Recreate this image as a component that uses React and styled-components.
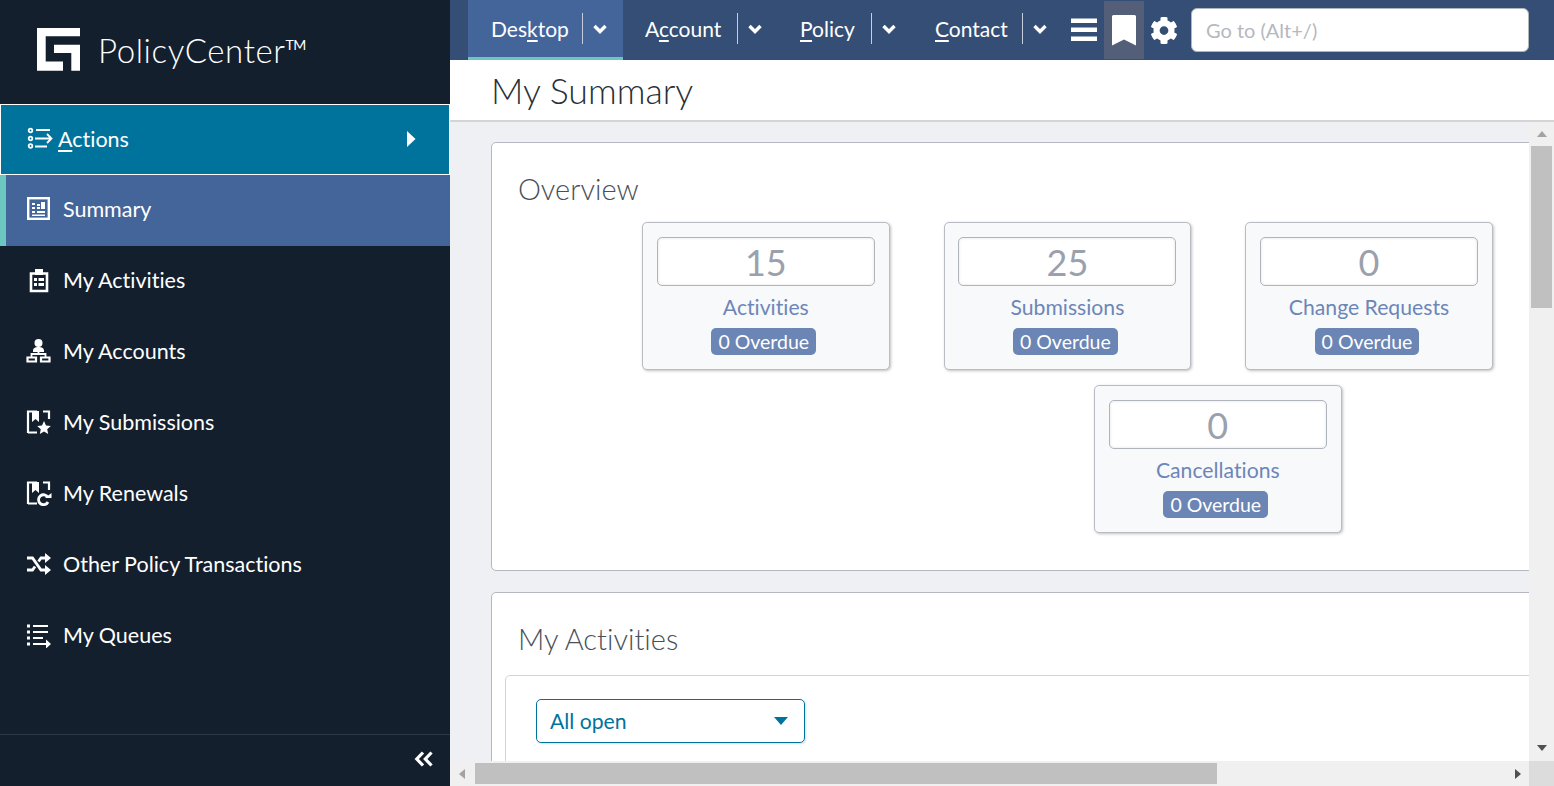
import React from 'react';
import styled, { createGlobalStyle } from 'styled-components';

const FONT = `"Lato", "Open Sans", sans-serif`;

const GlobalStyle = createGlobalStyle`
    html, body {
        margin: 0;
        height: 100%;
        overflow: hidden;
        font-family: ${FONT};
        font-variant-ligatures: none;
    }
    #root { height: 100%; }
    * { box-sizing: border-box; }
`;

const Page = styled.div`
    display: grid;
    grid-template-columns: 450px 1fr;
    width: 1554px;
    height: 786px;
    overflow: hidden;
`;

const Sidebar = styled.aside`
    display: flex;
    flex-direction: column;
    background: #141f2e;
    color: #fff;
    height: 786px;
`;

const Brand = styled.div`
    height: 104px;
    display: flex;
    align-items: center;
    gap: 18px;
    padding: 0 0 5px 37px;
`;

const BrandName = styled.div`
    font-size: 33px;
    font-weight: 300;
    letter-spacing: 0.6px;
    sup {
        font-size: 14px;
        font-weight: 400;
        vertical-align: 13px;
        line-height: 0;
        letter-spacing: -0.5px;
    }
`;

const ActionsRow = styled.div`
    height: 71px;
    background: #00739d;
    border: 1px solid #fff;
    display: flex;
    align-items: center;
    padding: 0 33px 2px 26px;
    gap: 5px;
    font-size: 21.5px;
    u { text-underline-offset: 3px; }
`;

const Spacer = styled.div`
    flex: 1;
`;

const NavRow = styled.div`
    height: 71px;
    display: flex;
    align-items: center;
    gap: 11px;
    padding-left: ${p => (p.$active ? '20px' : '26px')};
    padding-bottom: 3px;
    font-size: 21.5px;
    background: ${p => (p.$active ? '#44659a' : 'transparent')};
    border-left: ${p => (p.$active ? '6px solid #6bc7c0' : 'none')};
`;

const SideFooter = styled.div`
    margin-top: auto;
    height: 52px;
    border-top: 1px solid #2c3747;
    display: flex;
    align-items: center;
    justify-content: flex-end;
    padding: 0 16px 3px 0;
`;

const Main = styled.div`
    display: flex;
    flex-direction: column;
    min-width: 0;
    height: 786px;
    background: #eff0f4;
`;

const TopBar = styled.header`
    height: 60px;
    flex: none;
    background: #344e76;
    display: flex;
    align-items: stretch;
    padding-left: 18px;
    color: #fff;
`;

const Tab = styled.div`
    flex: none;
    width: ${p => p.$w}px;
    display: flex;
    align-items: center;
    padding-left: ${p => p.$pad}px;
    font-size: 21px;
    background: ${p => (p.$active ? '#44659a' : 'transparent')};
    border-bottom: 3px solid ${p => (p.$active ? '#6bc7c0' : 'transparent')};
    u { text-underline-offset: 3px; }
`;

const TabLabel = styled.span`
    flex: none;
    width: ${p => p.$w}px;
    white-space: nowrap;
`;

const TabDivider = styled.span`
    flex: none;
    width: 1px;
    height: 31px;
    background: #c6cedb;
    margin-right: 9px;
`;

const ToolIcon = styled.div`
    flex: none;
    width: ${p => p.$w}px;
    margin: 1px 0 1px;
    display: flex;
    align-items: center;
    justify-content: center;
    background: ${p => (p.$active ? '#535f78' : 'transparent')};
`;

const GoTo = styled.div`
    flex: none;
    width: 338px;
    height: 44px;
    margin: 8px 0 0 7px;
    background: #fff;
    border: 1px solid #b0b4bc;
    border-radius: 6px;
    color: #b5b8be;
    font-size: 20px;
    display: flex;
    align-items: center;
    padding-left: 14px;
`;

const TitleBar = styled.div`
    height: 62px;
    flex: none;
    background: #fff;
    border-bottom: 2px solid #d4d4d4;
    padding: 9px 0 0 41px;
    font-size: 35.7px;
    font-weight: 300;
    color: #2a2f38;
`;

const ScrollGrid = styled.div`
    flex: 1;
    min-height: 0;
    display: grid;
    grid-template-columns: 1fr 25px;
    grid-template-rows: 1fr 25px;
`;

const Viewport = styled.div`
    overflow: hidden;
    min-width: 0;
    min-height: 0;
    padding: 20px 0 0 41px;
`;

const Card = styled.section`
    width: 1300px;
    background: #fff;
    border: 1px solid #b5b8c0;
    border-radius: 5px;
    margin-bottom: 21px;
    padding: ${p => (p.$flush ? '27px 0 0 26px' : '27px 0 37px 26px')};
`;

const CardTitle = styled.h2`
    margin: 0;
    font-size: 29px;
    line-height: 38px;
    font-weight: 300;
    color: #4a4f58;
`;

const TileRow = styled.div`
    display: flex;
    gap: 54px;
    margin: ${p => p.$top}px 0 0 ${p => p.$left}px;
`;

const Tile = styled.div`
    width: 247.6px;
    height: 148px;
    background: #f8f9fb;
    border: 1px solid #b9bcc3;
    border-radius: 5px;
    box-shadow: 1px 1px 3px rgba(0, 0, 0, 0.25);
    padding: 14px;
    display: flex;
    flex-direction: column;
    align-items: center;
`;

const TileValue = styled.div`
    width: 218px;
    height: 49px;
    background: #fff;
    border: 1px solid #b0b4bc;
    border-radius: 5px;
    box-shadow: inset 0 0 3px rgba(0, 0, 0, 0.12);
    color: #9aa1ad;
    font-size: 36px;
    line-height: 49px;
    text-align: center;
`;

const TileLabel = styled.div`
    margin-top: 6px;
    font-size: 21.2px;
    line-height: 30px;
    color: #6c86b8;
    white-space: nowrap;
`;

const Badge = styled.div`
    margin: 6px 4px 0 0;
    height: 27px;
    padding: 0 7px;
    background: #6b85b5;
    color: #fff;
    border-radius: 5px;
    font-size: 19.5px;
    line-height: 27px;
    white-space: nowrap;
`;

const InnerPanel = styled.div`
    margin: 17px 0 0 -13px;
    height: 100px;
    border: 1px solid #d4d4d4;
    border-radius: 5px;
    padding: 23px 0 0 30px;
`;

const Select = styled.div`
    width: 269px;
    height: 44px;
    border: 1px solid #00739d;
    border-radius: 5px;
    box-shadow: 1px 1px 2px rgba(0, 0, 0, 0.15);
    color: #00739d;
    font-size: 21.2px;
    display: flex;
    align-items: center;
    justify-content: space-between;
    padding: 0 16px 0 13px;
`;

const Track = styled.div`
    background: #f0f0f0;
    display: flex;
    flex-direction: ${p => (p.$vertical ? 'column' : 'row')};
    align-items: center;
    padding: ${p => (p.$vertical ? '9px 0 10px' : '0 8px 0 9px')};
`;

const Arrow = styled.div`
    flex: none;
    width: 0;
    height: 0;
    border-style: solid;
    border-color: transparent;
    ${p => p.$dir === 'up' && `border-width: 0 5.5px 6px; border-bottom-color: ${p.$color};`}
    ${p => p.$dir === 'down' && `border-width: 6px 5.5px 0; border-top-color: ${p.$color};`}
    ${p => p.$dir === 'left' && `border-width: 5.5px 6px 5.5px 0; border-right-color: ${p.$color};`}
    ${p => p.$dir === 'right' && `border-width: 5.5px 0 5.5px 6px; border-left-color: ${p.$color};`}
`;

const VThumb = styled.div`
    width: 21px;
    height: 162px;
    margin: 9px 0 auto;
    background: #c0c0c0;
`;

const HThumb = styled.div`
    width: 742px;
    height: 21px;
    margin: 0 auto 0 10px;
    background: #c0c0c0;
`;

const Corner = styled.div`
    background: #dcdcdc;
`;

const Icon = ({ children, size = 26, view = 26 }) => (
    <svg width={size} height={size} viewBox={`0 0 ${view} ${view}`} fill="none" style={{ flex: 'none' }}>
        {children}
    </svg>
);

const LogoMark = () => (
    <svg width="43" height="43" viewBox="0 0 43 43" style={{ flex: 'none' }}>
        <path fill="#fff" d="M0 0H43V8.300H8.700V33.500H26V42.700H0Z" />
        <path fill="#fff" d="M17 16.700H43V42.700H34.300V25H17Z" />
    </svg>
);

const ActionsIcon = () => (
    <Icon>
        <g stroke="#fff" strokeWidth="1.800">
            <circle cx="3.500" cy="4.500" r="1.800" />
            <circle cx="3.500" cy="12.500" r="1.800" />
            <circle cx="3.500" cy="20" r="1.800" />
            <path d="M9 4H23M8 12.500H24M20 8l4.500 4.500L20 17M8 20.500H20" />
        </g>
    </Icon>
);

const SummaryIcon = () => (
    <Icon>
        <rect x="2.200" y="2.200" width="20.600" height="20.600" stroke="#fff" strokeWidth="2.400" />
        <path fill="#fff" d="M6 7h3v2H6zM6 11h3v2H6zM6 15h3v2H6zM6 18.500h13V20H6zM11 11h3v2h-3zM11 15h8v2h-8zM15 6h4v7h-4zM11 8h3v2h-3z" />
    </Icon>
);

const ActivitiesIcon = () => (
    <Icon>
        <path stroke="#fff" strokeWidth="2.600" d="M5 6.500H21V24H5Z" />
        <path fill="#fff" d="M9 2h8v6H9zM8 11h3v3H8zM12.500 11H18v3h-5.500zM8 16h3v3H8zM12.500 16H18v3h-5.500z" />
    </Icon>
);

const AccountsIcon = () => (
    <Icon>
        <circle cx="12.500" cy="5" r="4" fill="#fff" />
        <path fill="#fff" d="M7 13c0-3 2-4 5.500-4s5.500 1 5.500 4v1H7z" />
        <path stroke="#fff" strokeWidth="1.800" d="M12.500 13v3M5.500 19v-3h14v3" />
        <path stroke="#fff" strokeWidth="2.200" d="M1.500 19.500h8.500v4H1.500zM15 19.500h8.500v4H15z" />
    </Icon>
);

const BookmarkDoc = ({ children }) => (
    <Icon>
        <path stroke="#fff" strokeWidth="2.200" d="M2 24V2.500H11M17 2.500H23V10M2 23.500H11" />
        <path fill="#fff" d="M6 2h7v11l-3.500-3L6 13z" />
        {children}
    </Icon>
);

const SubmissionsIcon = () => (
    <BookmarkDoc>
        <path fill="#fff" d="M18 12l2 4.500 4.800.500-3.600 3.200 1 4.800-4.200-2.500-4.200 2.500 1-4.800-3.600-3.200 4.800-.500z" />
    </BookmarkDoc>
);

const RenewalsIcon = () => (
    <BookmarkDoc>
        <path stroke="#fff" strokeWidth="2.800" d="M22 17.500a5 5 0 1 0 0 4.500" />
        <path fill="#fff" d="M19 18h6.500v-5z" />
    </BookmarkDoc>
);

const ShuffleIcon = () => (
    <Icon>
        <path stroke="#fff" strokeWidth="2.800" d="M1 7H6.500L15 19H20M1 19H6.500L9 15.500M12.500 10.500L15 7H20" />
        <path fill="#fff" d="M19 2l6 5-6 5zM19 14l6 5-6 5z" />
    </Icon>
);

const QueuesIcon = () => (
    <Icon>
        <path fill="#fff" d="M1 2.500h3v3H1zM1 8.500h3v3H1zM1 14.500h3v3H1zM1 20.500h3v3H1z" />
        <path stroke="#fff" strokeWidth="2.200" d="M7 4H22M7 10H22M7 16H17M7 22H21" />
        <path fill="#fff" d="M20 17.500l5 4.500-5 4.500z" />
    </Icon>
);

const Chevron = ({ size = 16 }) => (
    <svg width={size} height={size} viewBox="0 0 16 16" fill="none" style={{ flex: 'none' }}>
        <path d="M2.500 5L8 10.500L13.500 5" stroke="#fff" strokeWidth="3.400" />
    </svg>
);

const CaretRight = () => (
    <svg width="9" height="16" viewBox="0 0 9 16" style={{ flex: 'none' }}>
        <path fill="#fff" d="M0 0L8.500 8L0 16Z" />
    </svg>
);

const DoubleChevron = () => (
    <svg width="20" height="16" viewBox="0 0 20 16" fill="none">
        <path d="M9 1.500L2.800 8L9 14.500M17.500 1.500L11.300 8L17.500 14.500" stroke="#fff" strokeWidth="3.200" />
    </svg>
);

const Hamburger = () => (
    <svg width="26" height="24" viewBox="0 0 26 24">
        <path fill="#fff" d="M0 0.500h26v4.500H0zM0 9.500h26v4.500H0zM0 18.500h26v4.500H0z" />
    </svg>
);

const Bookmark = () => (
    <svg width="24" height="31" viewBox="0 0 24 31">
        <path fill="#fff" d="M1.500 0H22.500Q24 0 24 1.500V30.500L12 24.500L0 30.500V1.500Q0 0 1.500 0Z" />
    </svg>
);

const Gear = () => (
    <svg width="28" height="29" viewBox="0 0 512 512">
        <path fill="#fff" d="M487.400 315.700l-42.600-24.600c4.300-23.200 4.300-47 0-70.200l42.600-24.600c4.900-2.800 7.100-8.600 5.500-14-11.100-35.600-30-67.800-54.700-94.600-3.800-4.100-10-5.100-14.800-2.300L380.800 110c-17.900-15.400-38.500-27.300-60.800-35.100V25.800c0-5.600-3.900-10.500-9.400-11.700-36.700-8.200-74.300-7.800-109.200 0-5.500 1.200-9.400 6.100-9.400 11.700V75c-22.200 7.900-42.800 19.800-60.800 35.100L88.700 85.500c-4.900-2.800-11-1.900-14.800 2.300-24.700 26.700-43.600 58.900-54.700 94.600-1.700 5.400.6 11.200 5.500 14L67.300 221c-4.300 23.200-4.300 47 0 70.200l-42.600 24.600c-4.900 2.800-7.100 8.600-5.500 14 11.100 35.600 30 67.800 54.700 94.600 3.800 4.100 10 5.100 14.800 2.300l42.600-24.600c17.900 15.400 38.500 27.300 60.800 35.100v49.200c0 5.600 3.900 10.500 9.400 11.700 36.700 8.200 74.300 7.800 109.200 0 5.500-1.200 9.400-6.100 9.400-11.700v-49.200c22.200-7.900 42.800-19.800 60.800-35.100l42.600 24.600c4.900 2.800 11 1.900 14.800-2.300 24.700-26.700 43.600-58.900 54.700-94.600 1.500-5.500-.7-11.300-5.600-14.100zM256 336c-44.100 0-80-35.900-80-80s35.900-80 80-80 80 35.900 80 80-35.900 80-80 80z" />
    </svg>
);

const SelectCaret = () => (
    <svg width="14" height="8" viewBox="0 0 14 8">
        <path fill="#00739d" d="M0 0H14L7 8Z" />
    </svg>
);

const sideItems = [
    { label: 'Summary', icon: <SummaryIcon />, active: true },
    { label: 'My Activities', icon: <ActivitiesIcon /> },
    { label: 'My Accounts', icon: <AccountsIcon /> },
    { label: 'My Submissions', icon: <SubmissionsIcon /> },
    { label: 'My Renewals', icon: <RenewalsIcon /> },
    { label: 'Other Policy Transactions', icon: <ShuffleIcon /> },
    { label: 'My Queues', icon: <QueuesIcon /> },
];

const tabs = [
    { label: <>Des<u>k</u>top</>, w: 155, pad: 23, labelW: 91, active: true },
    { label: <>A<u>c</u>count</>, w: 155, pad: 22, labelW: 92 },
    { label: <><u>P</u>olicy</>, w: 134, pad: 22, labelW: 71 },
    { label: <><u>C</u>ontact</>, w: 152, pad: 23, labelW: 87 },
];

const StatTile = ({ value, label }) => (
    <Tile>
        <TileValue>{value}</TileValue>
        <TileLabel>{label}</TileLabel>
        <Badge>0 Overdue</Badge>
    </Tile>
);

const App = () => (
    <Page>
        <GlobalStyle />
        <Sidebar>
            <Brand>
                <LogoMark />
                <BrandName>PolicyCenter<sup>TM</sup></BrandName>
            </Brand>
            <ActionsRow>
                <ActionsIcon />
                <span><u>A</u>ctions</span>
                <Spacer />
                <CaretRight />
            </ActionsRow>
            {sideItems.map(item => (
                <NavRow key={item.label} $active={item.active}>
                    {item.icon}
                    {item.label}
                </NavRow>
            ))}
            <SideFooter>
                <DoubleChevron />
            </SideFooter>
        </Sidebar>
        <Main>
            <TopBar>
                {tabs.map((tab, i) => (
                    <Tab key={i} $w={tab.w} $pad={tab.pad} $active={tab.active}>
                        <TabLabel $w={tab.labelW}>{tab.label}</TabLabel>
                        <TabDivider />
                        <Chevron />
                    </Tab>
                ))}
                <ToolIcon $w={40}><Hamburger /></ToolIcon>
                <ToolIcon $w={40} $active><Bookmark /></ToolIcon>
                <ToolIcon $w={40}><Gear /></ToolIcon>
                <GoTo>Go to (Alt+/)</GoTo>
            </TopBar>
            <TitleBar>My Summary</TitleBar>
            <ScrollGrid>
                <Viewport>
                    <Card>
                        <CardTitle>Overview</CardTitle>
                        <TileRow $top={14} $left={124}>
                            <StatTile value="15" label="Activities" />
                            <StatTile value="25" label="Submissions" />
                            <StatTile value="0" label="Change Requests" />
                        </TileRow>
                        <TileRow $top={15} $left={576}>
                            <StatTile value="0" label="Cancellations" />
                        </TileRow>
                    </Card>
                    <Card $flush>
                        <CardTitle>My Activities</CardTitle>
                        <InnerPanel>
                            <Select>
                                All open
                                <SelectCaret />
                            </Select>
                        </InnerPanel>
                    </Card>
                </Viewport>
                <Track $vertical>
                    <Arrow $dir="up" $color="#a3a3a3" />
                    <VThumb />
                    <Arrow $dir="down" $color="#505050" />
                </Track>
                <Track>
                    <Arrow $dir="left" $color="#a3a3a3" />
                    <HThumb />
                    <Arrow $dir="right" $color="#505050" />
                </Track>
                <Corner />
            </ScrollGrid>
        </Main>
    </Page>
);

export default App;
